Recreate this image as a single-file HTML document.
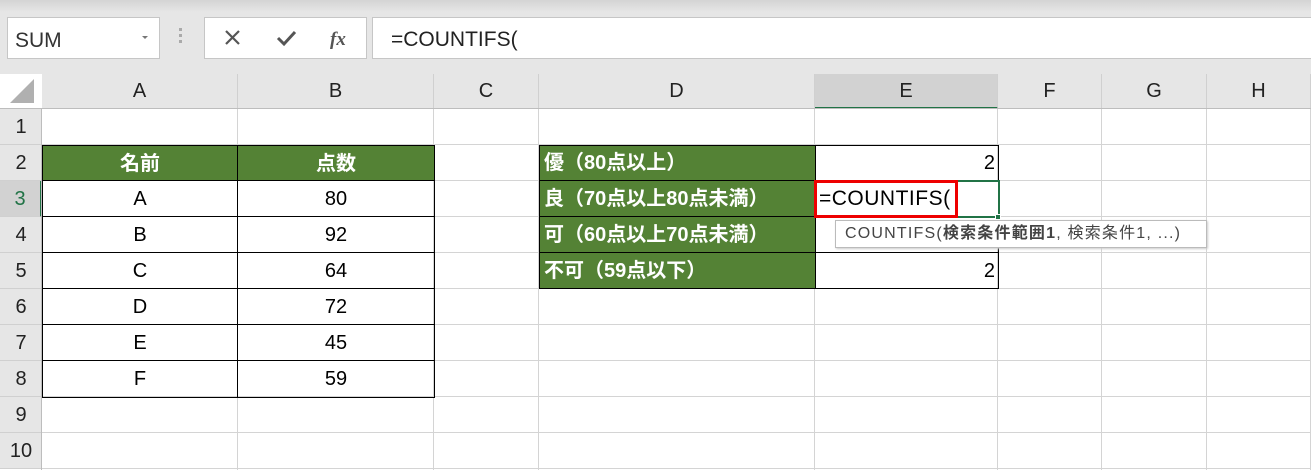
<!DOCTYPE html>
<html><head><meta charset="utf-8"><style>
*{margin:0;padding:0;box-sizing:border-box}
body{width:1311px;height:470px;overflow:hidden;background:#e6e6e6;font-family:"Liberation Sans","Noto Sans CJK JP",sans-serif;position:relative}
.a{position:absolute}
.top{left:0;top:0;width:1311px;height:12px;background:linear-gradient(#d4d4d4,#e6e6e6)}
.box{background:#fff;border:1px solid #c6c6c6}
.hd{background:#e6e6e6;color:#222;font-size:20px;text-align:center;line-height:35px}
.cell{font-size:20px;line-height:36px;color:#000}
.g{background:#548235;color:#fff;font-weight:bold}
</style></head><body>
<div class="a top"></div>
<div class="a box" style="left:7px;top:17px;width:153px;height:42px"></div>
<div class="a" style="left:15px;top:29px;font-size:21px;color:#333">SUM</div>
<div class="a" style="left:142px;top:36px;width:0;height:0;border-left:3px solid transparent;border-right:3px solid transparent;border-top:3px solid #777"></div>
<div class="a" style="left:179px;top:28px;width:3px;height:18px;background:repeating-linear-gradient(#aaa 0 3px,transparent 3px 6px)"></div>
<div class="a box" style="left:204px;top:17px;width:163px;height:42px"></div>
<svg class="a" style="left:204px;top:17px" width="163" height="42">
<path d="M22 14 L35 27 M35 14 L22 27" stroke="#555" stroke-width="2.2"/>
<path d="M74 21 L80 27 L91 15" stroke="#555" stroke-width="3" fill="none"/>
<text x="126" y="28" font-family="Liberation Serif" font-style="italic" font-weight="bold" font-size="19" fill="#555">fx</text>
</svg>
<div class="a box" style="left:372px;top:17px;width:960px;height:42px"></div>
<div class="a" style="left:391px;top:28px;font-size:21px;color:#222">=COUNTIFS(</div>
<div class="a" style="left:0;top:74px;width:1311px;height:396px;background:#fff"></div>
<div id="g"></div>
<div class="a" style="left:10px;top:79px;width:0;height:0;border-left:24px solid transparent;border-bottom:24px solid #b0b0b0"></div>
<script>
var cols=[42,238,434,539,815,998,1102,1207,1311],names="ABCDEFGH",h="";
for(var i=0;i<8;i++){var x=cols[i],w=cols[i+1]-x;
h+='<div class="a hd" style="left:'+x+'px;top:74px;width:'+w+'px;height:35px;border-right:1px solid #d0d0d0;'+(i==4?'background:#d2d2d2;border-bottom:2px solid #217346;':'')+'">'+names[i]+'</div>';
h+='<div class="a" style="left:'+(x+w-1)+'px;top:109px;width:1px;height:361px;background:#d4d4d4"></div>';}
h+='<div class="a" style="left:0;top:108px;width:1311px;height:1px;background:#bdbdbd"></div>';
for(var r=1;r<=10;r++){var y=109+(r-1)*36;
h+='<div class="a hd" style="left:0;top:'+y+'px;width:42px;height:36px;line-height:36px;border-bottom:1px solid #d0d0d0;'+(r==3?'background:#d2d2d2;color:#217346;border-right:2px solid #217346':'')+'">'+r+'</div>';
h+='<div class="a" style="left:42px;top:'+(y+35)+'px;width:1269px;height:1px;background:#d4d4d4"></div>';}
h+='<div class="a" style="left:41px;top:109px;width:1px;height:361px;background:#bdbdbd"></div>';
document.getElementById("g").innerHTML=h;
</script>
<div class="a cell g" style="left:42px;top:145px;width:196px;height:36px;text-align:center;border:1px solid #000">名前</div>
<div class="a cell g" style="left:237px;top:145px;width:198px;height:36px;text-align:center;border:1px solid #000">点数</div>
<div class="a" style="left:42px;top:180px;width:393px;height:218px;border:1px solid #000;border-top:none"></div>
<div class="a" style="left:237px;top:180px;width:1px;height:217px;background:#000"></div>
<div class="a" style="left:42px;top:216px;width:393px;height:1px;background:#000"></div>
<div class="a" style="left:42px;top:252px;width:393px;height:1px;background:#000"></div>
<div class="a" style="left:42px;top:288px;width:393px;height:1px;background:#000"></div>
<div class="a" style="left:42px;top:324px;width:393px;height:1px;background:#000"></div>
<div class="a" style="left:42px;top:360px;width:393px;height:1px;background:#000"></div>
<div class="a cell" style="left:42px;top:181px;width:196px;text-align:center">A<br>B<br>C<br>D<br>E<br>F</div>
<div class="a cell" style="left:238px;top:181px;width:196px;text-align:center">80<br>92<br>64<br>72<br>45<br>59</div>
<div class="a g" style="left:539px;top:145px;width:277px;height:144px;border:1px solid #000"></div>
<div class="a" style="left:815px;top:145px;width:184px;height:144px;border:1px solid #000;background:transparent"></div>
<div class="a" style="left:539px;top:180px;width:460px;height:1px;background:#000"></div>
<div class="a" style="left:539px;top:216px;width:460px;height:1px;background:#000"></div>
<div class="a" style="left:539px;top:252px;width:460px;height:1px;background:#000"></div>
<div class="a cell g" style="left:544px;top:145px;background:none">優（80点以上）<br>良（70点以上80点未満）<br>可（60点以上70点未満）<br>不可（59点以下）</div>
<div class="a cell" style="left:815px;top:145px;width:180px;text-align:right">2</div>
<div class="a cell" style="left:815px;top:253px;width:180px;text-align:right">2</div>
<div class="a" style="left:814px;top:180px;width:186px;height:38px;border:2px solid #217346;background:#fff"></div>
<div class="a" style="left:995px;top:214px;width:6px;height:6px;background:#217346;border:1px solid #fff"></div>
<div class="a cell" style="left:819px;top:181px;font-size:21px;letter-spacing:0.5px">=COUNTIFS(</div>
<div class="a" style="left:814px;top:180px;width:144px;height:38px;border:3px solid #e00"></div>
<div class="a" style="left:835px;top:220px;width:372px;height:28px;background:#fff;border:1px solid #bbb;box-shadow:1px 1px 2px #ccc;font-size:16px;line-height:26px;padding-left:9px;color:#444;letter-spacing:1.2px;white-space:nowrap">COUNTIFS(<b>検索条件範囲1</b>, 検索条件1, ...)</div>
</body></html>
